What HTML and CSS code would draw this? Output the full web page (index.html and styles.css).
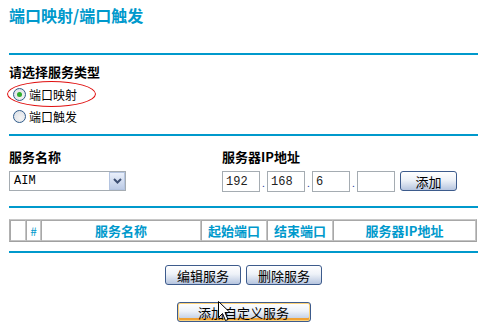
FILE: index.html
```html
<!DOCTYPE html>
<html lang="zh-CN">
<head>
    <meta charset="UTF-8">
    <title>端口映射/端口触发</title>
    <link rel="stylesheet" href="styles.css">
</head>
<body>
    <div class="page">
        <h1 class="title">端口映射/端口触发</h1>
        <div class="rule"></div>

        <div class="type">
            <div class="label">请选择服务类型</div>
            <label class="opt"><span class="radio on"></span>端口映射</label>
            <label class="opt"><span class="radio"></span>端口触发</label>
            <span class="mark"></span>
        </div>
        <div class="rule"></div>

        <div class="service">
            <div class="field name-field">
                <div class="label">服务名称</div>
                <div class="select">
                    <span class="select-text">AIM</span>
                    <span class="select-btn">
                        <svg width="9" height="6" viewBox="0 0 9 6"><path d="M1 1 L4.5 4.5 L8 1" fill="none" stroke="#3d4f73" stroke-width="2"/></svg>
                    </span>
                </div>
            </div>
            <div class="field">
                <div class="label">服务器IP地址</div>
                <div class="ip-row">
                    <input class="ip" type="text" value="192">
                    <span class="dot">.</span>
                    <input class="ip" type="text" value="168">
                    <span class="dot">.</span>
                    <input class="ip" type="text" value="6">
                    <span class="dot">.</span>
                    <input class="ip" type="text" value="">
                    <button class="btn add">添加</button>
                </div>
            </div>
        </div>
        <div class="rule"></div>

        <table class="list">
            <tr>
                <th class="c1"></th>
                <th class="c2 hash">#</th>
                <th class="c3">服务名称</th>
                <th class="c4">起始端口</th>
                <th class="c5">结束端口</th>
                <th class="c6">服务器IP地址</th>
            </tr>
        </table>
        <div class="rule"></div>

        <div class="actions">
            <button class="btn wide">编辑服务</button>
            <button class="btn wide">删除服务</button>
        </div>
        <div class="actions second">
            <button class="btn custom focus">添加自定义服务</button>
        </div>

        <svg class="cursor" width="13" height="21" viewBox="0 0 13 21">
            <path d="M0.5 0.5 L0.5 16.5 L4.5 12.5 L7.5 19.5 L10 18.5 L7 11.5 L12 11.5 Z" fill="#fff" stroke="#000" stroke-width="1"/>
        </svg>
    </div>
</body>
</html>
```

FILE: styles.css
```css
* {
    box-sizing: border-box;
    margin: 0;
    padding: 0;
}

body {
    background: #fff;
    font-family: "Noto Sans CJK SC", "DejaVu Sans", sans-serif;
    font-size: 13px;
    color: #000;
}

.page {
    position: relative;
    width: 469px;
    margin-left: 9px;
}

.title {
    height: 53px;
    padding-top: 5px;
    font-size: 16px;
    line-height: 20px;
    font-weight: bold;
    color: #0099cc;
}

.rule {
    height: 2px;
    background: #0099cc;
}

.label {
    font-weight: bold;
    line-height: 16px;
}

.type {
    position: relative;
    padding: 9px 0 7px;
}

.opt {
    display: flex;
    align-items: center;
    height: 22px;
    padding-left: 4px;
    font-size: 12px;
}

.type .label + .opt {
    margin-top: 3px;
}

.radio {
    width: 13px;
    height: 13px;
    margin-right: 3px;
    border: 1px solid #2f5b8a;
    border-radius: 50%;
    background: radial-gradient(circle at 60% 65%, #f4f4f4 0%, #d8dde4 100%);
    display: flex;
    align-items: center;
    justify-content: center;
}

.radio.on::after {
    content: "";
    width: 5px;
    height: 5px;
    border-radius: 50%;
    background: #2eae2e;
}

.mark {
    position: absolute;
    left: -2px;
    top: 26px;
    width: 89px;
    height: 26px;
    border: 1px solid #e01010;
    border-radius: 50%;
}

.service {
    display: flex;
    padding: 13px 0 11px;
}

.name-field {
    width: 213px;
}

.service .label {
    margin-bottom: 6px;
}

.select {
    display: flex;
    width: 117px;
    height: 20px;
    border: 1px solid #a5acb2;
}

.select-text {
    flex: 1;
    padding-left: 4px;
    font-family: "Liberation Mono", monospace;
    font-size: 12px;
    line-height: 18px;
}

.select-btn {
    width: 16px;
    border: 1px solid #b4c4e0;
    background: linear-gradient(#eaf0fb, #bccbe6);
    display: flex;
    align-items: center;
    justify-content: center;
}

.ip-row {
    display: flex;
    align-items: flex-start;
}

.ip {
    width: 38px;
    height: 21px;
    padding-left: 3px;
    border: 1px solid #a5acb2;
    font-family: "Liberation Mono", monospace;
    font-size: 12px;
    color: #222;
    outline: none;
}

.dot {
    width: 7px;
    text-align: center;
    font-size: 10px;
    line-height: 24px;
    color: #1a3a9a;
}

.btn {
    height: 20px;
    border: 1px solid #3d5b8c;
    border-radius: 3px;
    background: linear-gradient(#ffffff, #eef2f8 45%, #b6c5df);
    font-family: "Noto Sans CJK SC", sans-serif;
    font-size: 13px;
    line-height: 17px;
    color: #000;
}

.add {
    width: 57px;
    margin-left: 5px;
}

.list {
    width: 468px;
    height: 23px;
    margin: 11px 0 9px;
    border-spacing: 0;
    border: 1px solid;
    border-color: #c8c8c8 #a8a8a8 #a0a0a0 #b0b0b0;
}

.list th {
    border: 1px solid;
    border-color: #a8a8a8 #c4c4c4 #c4c4c4 #a8a8a8;
    font-size: 13px;
    font-weight: bold;
    color: #0099cc;
    text-align: center;
    line-height: 17px;
}

.list .hash {
    font-weight: normal;
    font-size: 12px;
}

.c1 { width: 16px; }
.c2 { width: 15px; }
.c3 { width: 160px; }
.c4 { width: 66px; }
.c5 { width: 66px; }

.actions {
    display: flex;
    justify-content: center;
    gap: 5px;
    margin-top: 12px;
}

.actions.second {
    margin-top: 17px;
}

.wide {
    width: 76px;
}

.custom {
    width: 134px;
}

.focus {
    box-shadow: inset 0 0 0 1px #fcd27a, inset 0 -2px 0 1px #f0a234;
}

.cursor {
    position: absolute;
    left: 209px;
    top: 301px;
}
```
